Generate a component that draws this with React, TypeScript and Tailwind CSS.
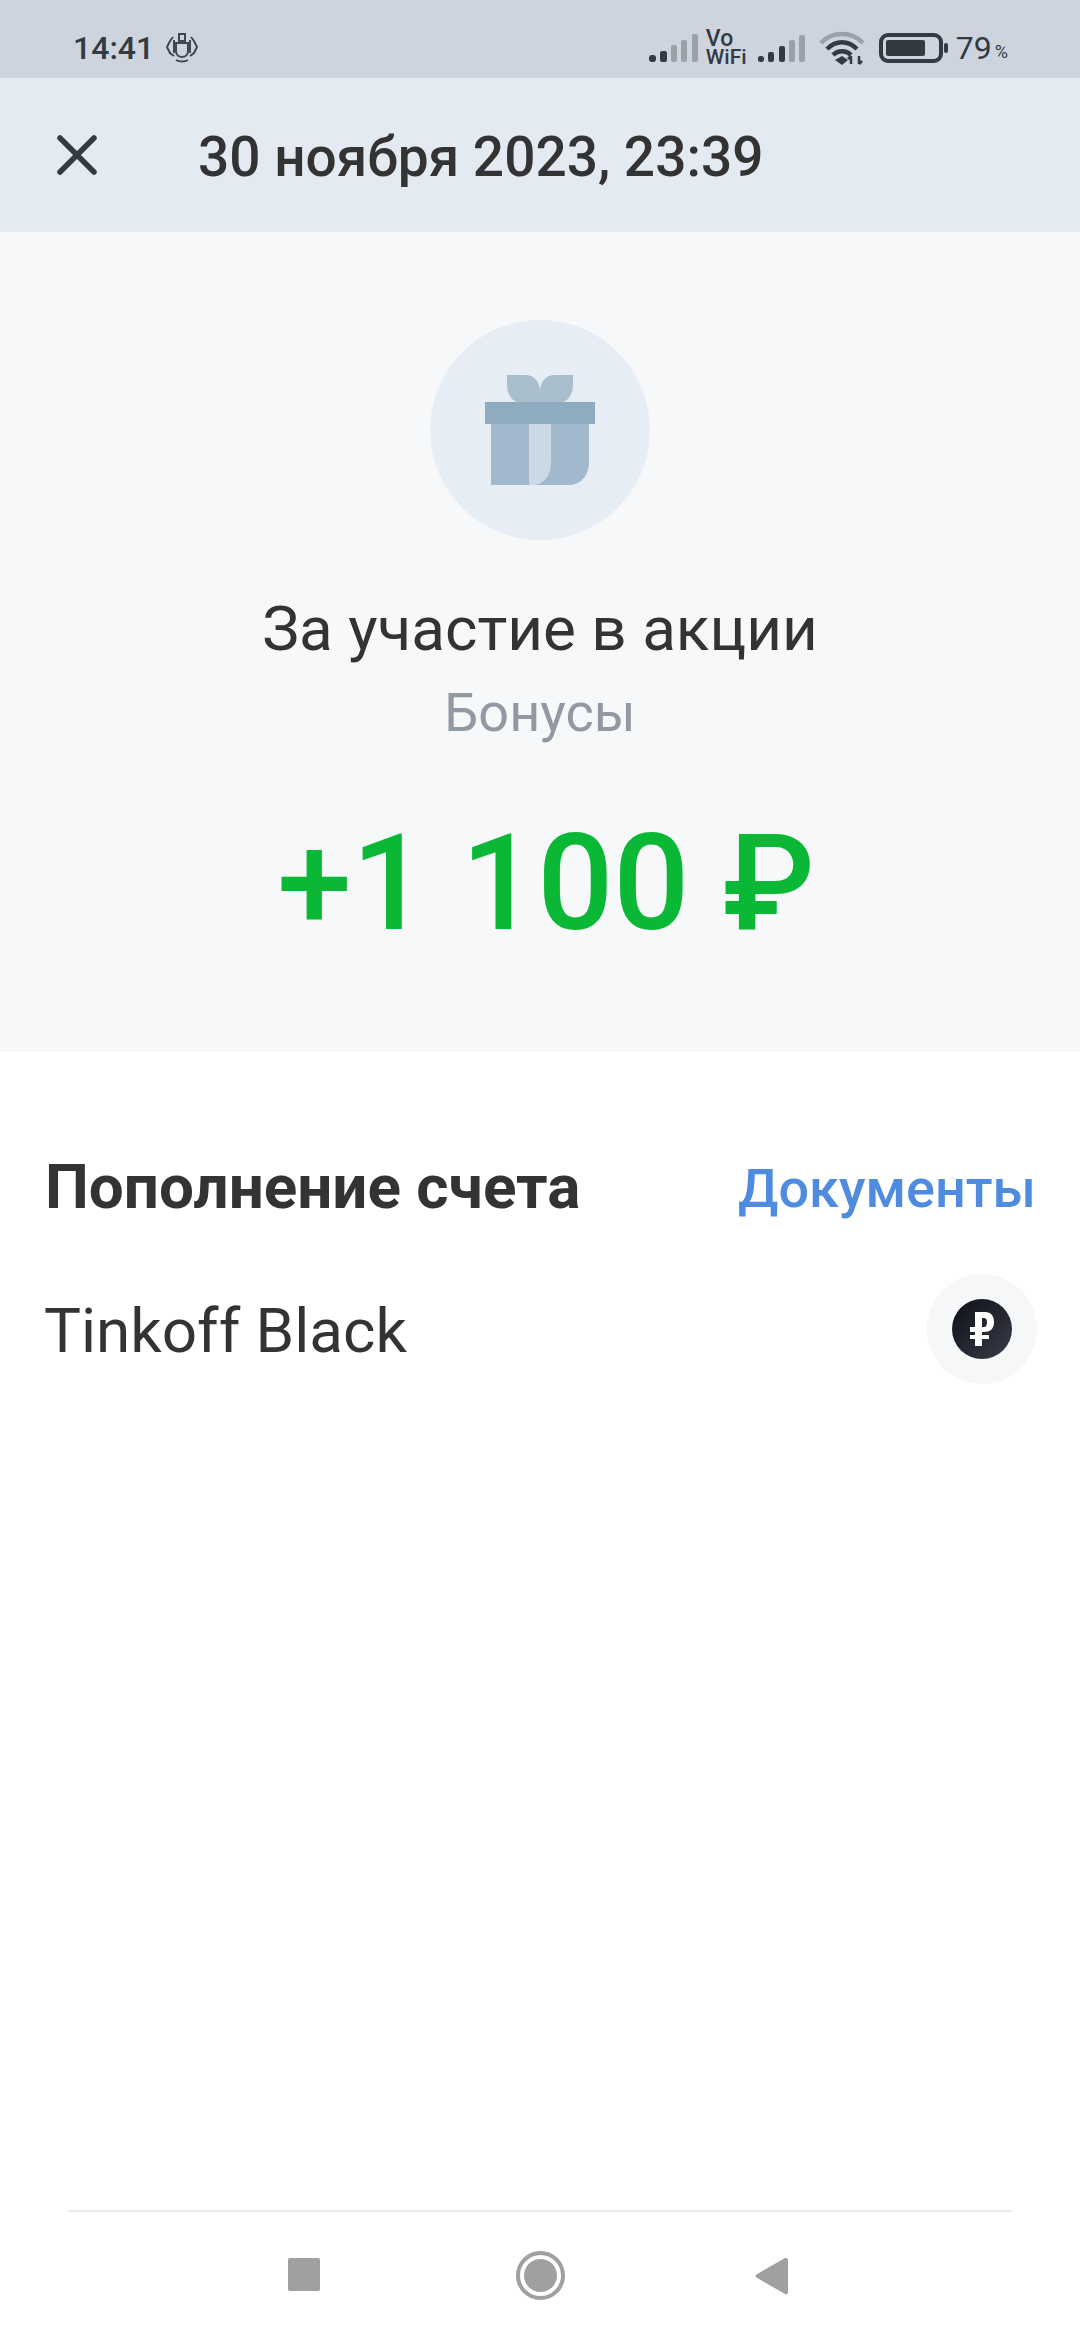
const font = { fontFamily: 'Roboto, sans-serif' };

function StatusIcons() {
  return (
    <div className="flex items-center">
      {/* signal 1 */}
      <svg width="50" height="32" viewBox="0 0 50 32">
        <rect x="0" y="23" width="7" height="7" rx="3" fill="#333a42" />
        <rect x="11" y="19" width="7" height="11" rx="2" fill="#333a42" />
        <rect x="22" y="13" width="6" height="17" rx="2" fill="#9aa1a9" />
        <rect x="32" y="8" width="6" height="22" rx="2" fill="#9aa1a9" />
        <rect x="43" y="2" width="6" height="28" rx="2" fill="#9aa1a9" />
      </svg>
      <div className="ml-[7px] flex flex-col text-[#333a42] font-medium text-[21px] leading-[19px] w-[44px]">
        <span className="text-[23px] leading-[19px]">Vo</span>
        <span>WiFi</span>
      </div>
      <svg width="48" height="32" viewBox="0 0 48 32" className="ml-[8px]">
        <rect x="0" y="24" width="6" height="6" rx="2.5" fill="#333a42" />
        <rect x="10" y="20" width="6" height="10" rx="2" fill="#333a42" />
        <rect x="21" y="14" width="6" height="16" rx="2" fill="#333a42" />
        <rect x="31" y="8" width="6" height="22" rx="2" fill="#9aa1a9" />
        <rect x="41" y="3" width="6" height="27" rx="2" fill="#9aa1a9" />
      </svg>
      <svg width="48" height="36" viewBox="0 0 48 36" className="ml-[12px]">
        <path d="M3 13 C14 1 34 1 45 13" fill="none" stroke="#9aa1a9" strokeWidth="4.5" />
        <path d="M9 19 C18 10 30 10 39 19" fill="none" stroke="#333a42" strokeWidth="4.5" />
        <path d="M15 25 C20 20 28 20 33 25" fill="none" stroke="#333a42" strokeWidth="4.5" />
        <path d="M17 30 L24 26 L30 30 L24 35 Z" fill="#333a42" />
        <path d="M33 26 v8 M30 29 l3 -3 M41 26 v8 M41 34 l3 -3" stroke="#333a42" strokeWidth="2.5" fill="none" />
      </svg>
      <div className="ml-[13px] flex items-center">
        <div className="w-[64px] h-[30px] rounded-[9px] border-[4px] border-[#333a42] p-[3px]">
          <div className="h-full w-[39px] rounded-[2px] bg-[#333a42]" />
        </div>
        <div className="ml-[1px] w-[4px] h-[10px] rounded-[2px] bg-[#333a42]" />
      </div>
      <span className="ml-[8px] text-[32px] leading-none text-[#333a42]">79</span>
      <span className="ml-[3px] text-[18px] leading-none text-[#333a42] mt-[8px]">%</span>
    </div>
  );
}

export default function App() {
  return (
    <div style={font} className="w-[1080px] h-[2340px] bg-white flex flex-col overflow-hidden">
      {/* status bar */}
      <div className="h-[78px] bg-[#cdd4de] flex items-center justify-between pt-[18px] pl-[73px] pr-[72px]">
        <div className="flex items-center gap-[12px]">
          <span className="text-[32px] leading-none font-medium text-[#333a42]">14:41</span>
          <svg width="32" height="30" viewBox="0 0 32 30" fill="none" stroke="#414851" strokeWidth="2">
            <rect x="13" y="1" width="6" height="7" />
            <path d="M10 10 H22 V18 C22 22 19 24 16 24 C13 24 10 22 10 18 Z" />
            <path d="M7 4 L4 8 L1 14 L4 20 L8 23 M25 4 L28 8 L31 14 L28 20 L24 23" />
            <path d="M8 7 V20 M24 7 V20 M10 27 C13 29 19 29 22 27" />
          </svg>
        </div>
        <StatusIcons />
      </div>

      {/* header */}
      <div className="h-[154px] bg-[#e4eaf2] flex items-center pl-[56px]">
        <svg width="42" height="42" viewBox="0 0 42 42">
          <path d="M4 4 L38 38 M38 4 L4 38" stroke="#333a42" strokeWidth="5.5" strokeLinecap="round" />
        </svg>
        <h1 className="ml-[100px] mt-[5px] text-[55px] leading-none font-medium text-[#333333]">30 ноября 2023, 23:39</h1>
      </div>

      {/* hero */}
      <div className="h-[820px] bg-[#f6f8fa] flex flex-col items-center pt-[88px]">
        <div className="w-[220px] h-[220px] rounded-full bg-[#e7edf4] flex items-center justify-center">
          <svg width="110" height="110" viewBox="0 0 110 110">
            <path d="M22 0 H40 C49 0 54 6 55 15 C56 6 61 0 70 0 H88 V10 C88 20 82 28 74 28 H36 C28 28 22 20 22 10 Z" fill="#a9bfce" />
            <rect x="0" y="27" width="110" height="22" fill="#8fabc0" />
            <path d="M6 49 H104 V87 C104 100 96 110 84 110 H6 Z" fill="#a2b8cc" />
            <path d="M44 49 H66 V87 C66 100 60 108 50 110 H44 Z" fill="#cad9e4" />
          </svg>
        </div>
        <div className="mt-[51px] text-[62px] leading-[76px] text-[#333333]">За участие в акции</div>
        <div className="mt-[16px] text-[54px] leading-[60px] text-[#9299a2]">Бонусы</div>
        <div className="mt-[66px] ml-[12px] text-[134px] leading-[150px] font-medium text-[#0bb836]">+1 100 ₽</div>
      </div>

      {/* account block */}
      <div className="flex items-center justify-between pl-[45px] pr-[44px] pt-[99px]">
        <h2 className="text-[62px] leading-[68px] font-bold text-[#333333]">Пополнение счета</h2>
        <a className="mt-[4px] text-[54px] leading-[68px] font-medium text-[#4f8ce0]">Документы</a>
      </div>
      <div className="flex items-center justify-between pl-[44px] pr-[43px] mt-[51px]">
        <span className="mt-[4px] text-[62px] leading-[72px] text-[#333333]">Tinkoff Black</span>
        <div className="w-[110px] h-[110px] rounded-full bg-[#f5f7f9] flex items-center justify-center">
          <div className="w-[60px] h-[60px] rounded-full bg-gradient-to-br from-[#0c1119] to-[#383d49] flex items-center justify-center">
            <svg width="24" height="34" viewBox="0 0 24 34">
              <path fillRule="evenodd" d="M5 0 H15 C21 0 24 4 24 10 C24 17 20 20 14 20 H12 V23 H19 V27 H12 V34 H5 V27 H0 V23 H5 V20 H0 V15 H5 Z M12 6 V15 H14 C16 15 17 13 17 10 C17 8 16 6 14 6 Z" fill="#ffffff" />
            </svg>
          </div>
        </div>
      </div>

      {/* nav bar */}
      <div className="mt-auto mx-[68px] h-[130px] border-t-2 border-[#ececec] flex items-start pt-[39px] pl-[220px]">
        <div className="w-[32px] h-[33px] mt-[7px] rounded-[2px] bg-[#a0a0a0]" />
        <div className="ml-[196px] w-[49px] h-[49px] rounded-full border-[4px] border-[#a0a0a0] flex items-center justify-center">
          <div className="w-[33px] h-[33px] rounded-full bg-[#a0a0a0]" />
        </div>
        <svg width="34" height="38" viewBox="0 0 34 42" preserveAspectRatio="none" className="ml-[190px] mt-[6px]">
          <path d="M31 1 C32 1 33 2 33 3 V39 C33 41 31 42 30 41 L2 23 C0 22 0 20 2 19 L30 1 Z" fill="#a0a0a0" />
        </svg>
      </div>
    </div>
  );
}
